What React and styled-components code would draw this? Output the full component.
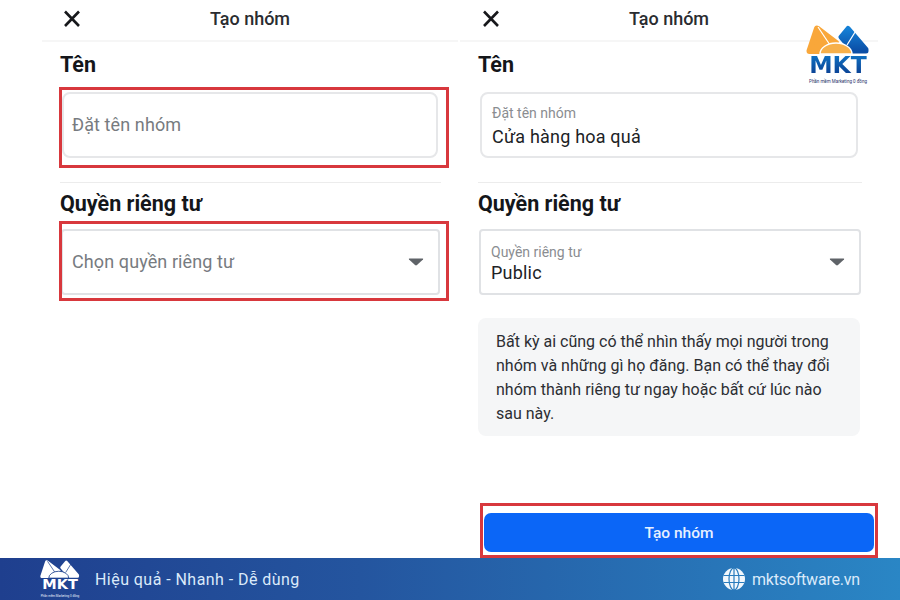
import React from "react"
import styled, { createGlobalStyle } from "styled-components"

const GlobalStyle = createGlobalStyle`
  html, body {
    margin: 0;
    padding: 0;
    background: #fff;
  }
  * {
    box-sizing: border-box;
  }
`

const Page = styled.div`
  position: relative;
  width: 900px;
  height: 600px;
  display: flex;
  flex-direction: column;
  overflow: hidden;
  background: #fff;
  color: #1c1e21;
  font-family: Roboto, "Liberation Sans", sans-serif;
`

const Screens = styled.main`
  flex: 1;
  display: flex;
  gap: 2px;
  padding-left: 42px;
`

const Screen = styled.section`
  width: ${props => props.$width}px;
  display: flex;
  flex-direction: column;
`

const Header = styled.header`
  position: relative;
  height: 42px;
  display: flex;
  align-items: center;
  justify-content: center;
  border-bottom: 2px solid #f6f6f6;
`

const CloseIcon = styled.svg`
  position: absolute;
  left: ${props => props.$left}px;
  top: 9px;
  width: 20px;
  height: 20px;
`

const HeaderTitle = styled.h1`
  margin: -4px 0 0;
  font-size: 18px;
  font-weight: 500;
  color: #2a2c30;
`

const Body = styled.div`
  flex: 1;
  display: flex;
  flex-direction: column;
  padding: 11px 0 0 18px;
`

const SectionTitle = styled.h2`
  margin: 0 0 ${props => props.$gap}px;
  height: 24px;
  line-height: 24px;
  font-size: 21.5px;
  font-weight: 700;
  color: #14161a;
`

const Divider = styled.hr`
  width: ${props => props.$width}px;
  height: 1px;
  margin: 24px 0 9px;
  border: 0;
  background: #ececec;
`

const Field = styled.div`
  position: relative;
  width: ${props => props.$width}px;
  height: 66px;
  margin-left: ${props => props.$shift || 0}px;
  padding: 0 10px 0 ${props => props.$pad}px;
  display: flex;
  align-items: center;
  justify-content: space-between;
  background: #fff;
  border: 2px solid ${props => props.$soft ? "#e6e7e9" : "#e0e2e5"};
  border-radius: ${props => props.$soft ? 8 : 4}px;
`

const FieldText = styled.div`
  display: flex;
  flex-direction: column;
  padding-top: ${props => props.$top}px;
`

const Placeholder = styled.span`
  font-size: 18px;
  line-height: 22px;
  letter-spacing: 0.1px;
  color: #777b80;
`

const SmallLabel = styled.span`
  font-size: 14px;
  line-height: 15px;
  color: #8a8d91;
`

const Value = styled.span`
  font-size: 18px;
  margin-top: 3px;
  line-height: ${props => props.$tight ? 20 : 26}px;
  letter-spacing: 0.2px;
  color: #202225;
`

const Caret = styled.svg`
  width: 16px;
  height: 8px;
  margin-right: 4px;
`

const Highlight = styled.div`
  position: absolute;
  top: ${props => props.$top}px;
  bottom: ${props => props.$bottom}px;
  left: ${props => props.$left}px;
  right: ${props => props.$right}px;
  border: 3px solid #d8383d;
  pointer-events: none;
`

const Notice = styled.p`
  width: 382px;
  height: 118px;
  margin: 23px 0 0;
  padding: 12px 18px;
  background: #f5f6f7;
  border-radius: 8px;
  font-size: 16px;
  line-height: 24px;
  color: #2c2e33;
`

const ButtonBar = styled.div`
  position: relative;
  width: 390px;
  margin: 77px 0 0 6px;
`

const SubmitButton = styled.button`
  width: 100%;
  height: 39px;
  display: block;
  border: 0;
  border-radius: 7px;
  background: #0b66f7;
  color: #e6f0ff;
  font-family: inherit;
  font-size: 15.5px;
  font-weight: 500;
`

const Footer = styled.footer`
  position: relative;
  height: 42px;
  flex-shrink: 0;
  display: flex;
  align-items: center;
  justify-content: space-between;
  padding: 0 40px;
  background: linear-gradient(90deg, #1f3f8e 0%, #24559f 40%, #2a86c5 100%);
  color: #dbeafa;
`

const FooterLeft = styled.div`
  display: flex;
  align-items: center;
  gap: 15px;
`

const FooterRight = styled.div`
  display: flex;
  align-items: center;
  gap: 7px;
`

const FooterText = styled.span`
  font-size: 16px;
  letter-spacing: ${props => props.$spacing}px;
`

const Brand = styled.div`
  display: flex;
  flex-direction: column;
  align-items: center;
  width: ${props => props.$width}px;
`

const CornerBrand = styled.div`
  position: absolute;
  top: 25px;
  left: 806px;
`

const BrandMark = styled.svg`
  display: block;
  width: 100%;
`

const BrandName = styled.span`
  display: block;
  font-family: "DejaVu Sans", sans-serif;
  font-weight: 700;
  font-size: ${props => props.$size}px;
  line-height: ${props => props.$size * 0.8}px;
  margin-top: ${props => props.$gap}px;
  color: ${props => props.$mono ? "#fff" : "transparent"};
  background: ${props => props.$mono ? "none" : "linear-gradient(180deg, #0f6fc0 0%, #0b3f92 100%)"};
  -webkit-background-clip: ${props => props.$mono ? "border-box" : "text"};
  background-clip: ${props => props.$mono ? "border-box" : "text"};
`

const BrandCaption = styled.span`
  display: block;
  white-space: nowrap;
  font-size: ${props => props.$size}px;
  line-height: ${props => props.$size + 1}px;
  margin-top: ${props => props.$gap}px;
  color: ${props => props.$mono ? "#e8eefa" : "#27336a"};
`

const Close = ({ left }) => (
  <CloseIcon $left={left} viewBox="0 0 20 20" fill="none" stroke="#17181b" strokeWidth="2.6">
    <path d="M3 2.5 L17 17 M17 2.5 L3 17" />
  </CloseIcon>
)

const DownCaret = () => (
  <Caret viewBox="0 0 16 8">
    <path d="M1.5 0.5 H14.5 Q15.6 0.5 15 1.5 L9 7 Q8 7.8 7 7 L1 1.5 Q0.4 0.5 1.5 0.5 Z" fill="#5f6368" />
  </Caret>
)

const Globe = () => (
  <svg width="22" height="22" viewBox="0 0 22 22">
    <circle cx="11" cy="11" r="11" fill="#f2f7fc" />
    <g fill="none" stroke="#2a7cbd" strokeWidth="1.2">
      <ellipse cx="11" cy="11" rx="5" ry="11" />
      <path d="M11 0 V22 M0.5 7.5 H21.5 M0.5 14.5 H21.5" />
    </g>
  </svg>
)

const Logo = ({ width, mono, nameSize, nameGap, captionSize, captionGap }) => {
  const orange = mono ? "#fff" : "#f9a73a"
  const sun = mono ? "#fff" : "#f7b04a"
  const blue = mono ? "#fff" : "url(#mktBlue)"
  const gapColor = mono ? "#24478f" : "#fff"
  return (
    <Brand $width={width}>
      <BrandMark viewBox="0 0 64 29">
        {!mono && (
          <defs>
            <linearGradient id="mktBlue" x1="0" y1="0" x2="0" y2="1">
              <stop offset="0" stopColor="#1480d6" />
              <stop offset="1" stopColor="#0b4ea6" />
            </linearGradient>
          </defs>
        )}
        <path
          d="M11 3.5 L30 18 L15 26 H3.5 Z"
          fill={orange}
          stroke={orange}
          strokeWidth="6"
          strokeLinejoin="round"
        />
        <path d="M12 2 L24 20" stroke={gapColor} strokeWidth="1.2" fill="none" />
        <path
          d="M42 3.5 L60 24.5 V26 H47 L35 12 Z"
          fill={blue}
          stroke={blue}
          strokeWidth="5"
          strokeLinejoin="round"
        />
        <path d="M51 4 L41 20" stroke={gapColor} strokeWidth="1.2" fill="none" />
        <path d="M14 29 A16 11 0 0 1 46 29 Z" fill={sun} stroke={gapColor} strokeWidth="1.4" />
      </BrandMark>
      <BrandName $size={nameSize} $gap={nameGap} $mono={mono}>MKT</BrandName>
      <BrandCaption $size={captionSize} $gap={captionGap} $mono={mono}>Phần mềm Marketing 0 đồng</BrandCaption>
    </Brand>
  )
}

const App = () => {
  return (
    <Page>
      <GlobalStyle />
      <Screens>
        <Screen $width={416}>
          <Header>
            <Close left={20} />
            <HeaderTitle>Tạo nhóm</HeaderTitle>
          </Header>
          <Body>
            <SectionTitle $gap={15}>Tên</SectionTitle>
            <Field $width={376} $shift={2} $pad={8} $soft>
              <Placeholder>Đặt tên nhóm</Placeholder>
              <Highlight $top={-7} $bottom={-12} $left={-5} $right={-13} />
            </Field>
            <Divider $width={381} />
            <SectionTitle $gap={13}>Quyền riêng tư</SectionTitle>
            <Field $width={379} $shift={1} $pad={9}>
              <Placeholder>Chọn quyền riêng tư</Placeholder>
              <DownCaret />
              <Highlight $top={-10} $bottom={-8} $left={-4} $right={-11} />
            </Field>
          </Body>
        </Screen>
        <Screen $width={418}>
          <Header>
            <Close left={21} />
            <HeaderTitle>Tạo nhóm</HeaderTitle>
          </Header>
          <Body>
            <SectionTitle $gap={15}>Tên</SectionTitle>
            <Field $width={378} $shift={2} $pad={10} $soft>
              <FieldText $top={5}>
                <SmallLabel>Đặt tên nhóm</SmallLabel>
                <Value>Cửa hàng hoa quả</Value>
              </FieldText>
            </Field>
            <Divider $width={384} />
            <SectionTitle $gap={13}>Quyền riêng tư</SectionTitle>
            <Field $width={382} $shift={1} $pad={10}>
              <FieldText $top={3}>
                <SmallLabel>Quyền riêng tư</SmallLabel>
                <Value $tight>Public</Value>
              </FieldText>
              <DownCaret />
            </Field>
            <Notice>
              Bất kỳ ai cũng có thể nhìn thấy mọi người trong nhóm và những gì họ đăng. Bạn có thể thay đổi nhóm thành riêng tư ngay hoặc bất cứ lúc nào sau này.
            </Notice>
            <ButtonBar>
              <SubmitButton>Tạo nhóm</SubmitButton>
              <Highlight $top={-10} $bottom={-6} $left={-4} $right={-4} />
            </ButtonBar>
          </Body>
        </Screen>
      </Screens>
      <Footer>
        <FooterLeft>
          <Logo width={40} mono nameSize={14.5} nameGap={1} captionSize={3} captionGap={3} />
          <FooterText $spacing={0.45}>Hiệu quả - Nhanh - Dễ dùng</FooterText>
        </FooterLeft>
        <FooterRight>
          <Globe />
          <FooterText $spacing={-0.2}>mktsoftware.vn</FooterText>
        </FooterRight>
      </Footer>
      <CornerBrand>
        <Logo width={64} nameSize={23.5} nameGap={2} captionSize={4.5} captionGap={4} />
      </CornerBrand>
    </Page>
  )
}

export default App
